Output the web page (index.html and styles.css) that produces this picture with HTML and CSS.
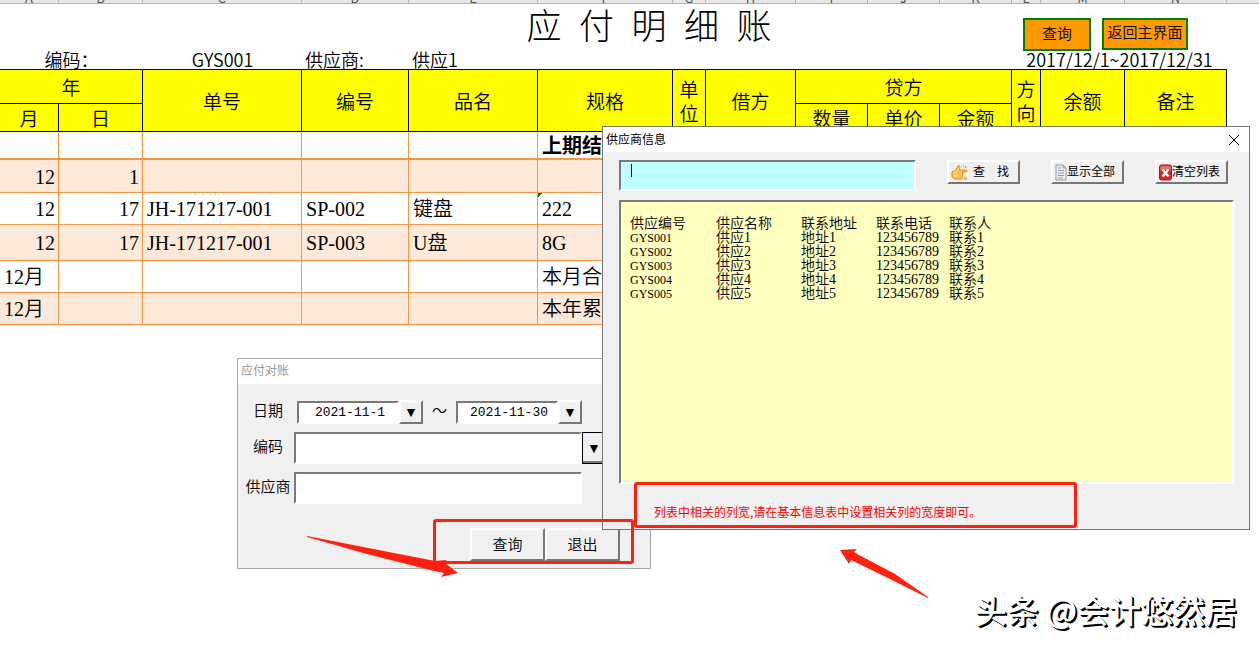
FILE: index.html
```html
<!DOCTYPE html>
<html lang="zh-CN">
<head>
    <meta charset="UTF-8">
    <meta name="viewport" content="width=device-width, initial-scale=1.0">
    <title>应付明细账</title>
    <link rel="stylesheet" href="styles.css">
</head>
<body>

    <!-- Hoja de calculo -->
    <main class="sheet">
        <div class="col-letters columns">
            <span>A</span><span>B</span><span>C</span><span>D</span><span>E</span><span>F</span><span>G</span>
            <span>H</span><span>I</span><span>J</span><span>K</span><span>L</span><span>M</span><span>N</span><span></span>
        </div>

        <div class="sheet-head columns">
            <h1 class="title">应  付  明  细  账</h1>
            <div class="actions">
                <button type="button" class="btn-orange">查询</button>
                <button type="button" class="btn-orange btn-small">返回主界面</button>
            </div>
        </div>
        <div class="info columns">
            <span class="info-label">编码：</span>
            <span class="info-code">GYS001</span>
            <span class="info-cell">供应商:</span>
            <span class="info-cell">供应1</span>
            <span class="info-dates">2017/12/1~2017/12/31</span>
        </div>

        <table class="ledger">
            <colgroup>
                <col class="c-a"><col class="c-b"><col class="c-c"><col class="c-d"><col class="c-e">
                <col class="c-f"><col class="c-g"><col class="c-h"><col class="c-i"><col class="c-i">
                <col class="c-i"><col class="c-l"><col class="c-m"><col class="c-n">
            </colgroup>
            <thead>
                <tr>
                    <th colspan="2">年</th>
                    <th rowspan="2">单号</th>
                    <th rowspan="2">编号</th>
                    <th rowspan="2">品名</th>
                    <th rowspan="2">规格</th>
                    <th rowspan="2">单<br>位</th>
                    <th rowspan="2">借方</th>
                    <th colspan="3">贷方</th>
                    <th rowspan="2">方<br>向</th>
                    <th rowspan="2">余额</th>
                    <th rowspan="2">备注</th>
                </tr>
                <tr class="sub">
                    <th>月</th>
                    <th>日</th>
                    <th>数量</th>
                    <th>单价</th>
                    <th>金额</th>
                </tr>
            </thead>
            <tbody>
                <tr class="opening">
                    <td></td><td></td><td></td><td></td><td></td><td>上期结余</td><td></td>
                    <td></td><td></td><td></td><td></td><td></td><td></td><td></td>
                </tr>
                <tr class="shade">
                    <td class="num">12</td><td class="num">1</td><td></td><td></td><td></td><td></td><td></td>
                    <td></td><td></td><td></td><td></td><td></td><td></td><td></td>
                </tr>
                <tr>
                    <td class="num">12</td><td class="num">17</td><td>JH-171217-001</td><td>SP-002</td><td>键盘</td><td class="flag">222</td><td></td>
                    <td></td><td></td><td></td><td></td><td></td><td></td><td></td>
                </tr>
                <tr class="shade tall">
                    <td class="num">12</td><td class="num">17</td><td>JH-171217-001</td><td>SP-003</td><td>U盘</td><td>8G</td><td></td>
                    <td></td><td></td><td></td><td></td><td></td><td></td><td></td>
                </tr>
                <tr>
                    <td>12月</td><td></td><td></td><td></td><td></td><td>本月合计</td><td></td>
                    <td></td><td></td><td></td><td></td><td></td><td></td><td></td>
                </tr>
                <tr class="shade">
                    <td>12月</td><td></td><td></td><td></td><td></td><td>本年累计</td><td></td>
                    <td></td><td></td><td></td><td></td><td></td><td></td><td></td>
                </tr>
            </tbody>
        </table>
    </main>

    <!-- Ventana de consulta -->
    <section class="window query-window">
        <header class="window-title inactive">应付对账</header>
        <form class="query-form">
            <div class="row">
                <label for="desde">日期</label>
                <div class="dates">
                    <input type="text" id="desde" class="sunken date" value="2021-11-1">
                    <button type="button" class="raised drop" aria-label="开始日期">▼</button>
                    <span class="tilde">～</span>
                    <input type="text" id="hasta" class="sunken date" value="2021-11-30" aria-label="结束日期">
                    <button type="button" class="raised drop" aria-label="结束日期">▼</button>
                </div>
            </div>
            <div class="row">
                <label for="codigo">编码</label>
                <input type="text" id="codigo" class="sunken field">
                <button type="button" class="raised drop drop-focus" aria-label="编码">▼</button>
            </div>
            <div class="row">
                <label for="proveedor">供应商</label>
                <input type="text" id="proveedor" class="sunken field">
            </div>
            <div class="buttons">
                <button type="button" class="raised">查询</button>
                <button type="button" class="raised">退出</button>
            </div>
        </form>
    </section>

    <!-- Ventana de proveedores -->
    <section class="window supplier-window">
        <header class="window-title">
            <span>供应商信息</span>
            <button type="button" class="close" aria-label="关闭">
                <svg width="12" height="12" viewBox="0 0 12 12"><path d="M1 1l10 10M11 1L1 11" stroke="#000" fill="none"/></svg>
            </button>
        </header>
        <div class="supplier-body">
            <div class="toolbar">
                <div class="sunken search">
                    <span class="caret"></span>
                    <input type="text" aria-label="查找">
                </div>
                <button type="button" class="raised tool">
                    <svg width="17" height="17" viewBox="0 0 17 17">
                        <path d="M1 8l3-1 3-5c1-1 2 0 2 1L8 6h7c1.500 0 1.500 2 0 2h-4c1.500 0 1.500 2 0 2 1 0 1 2 0 2 1 0 1 3-1 3H4l-3-2z" fill="#ffc457" stroke="#e8890c"/>
                        <path d="M2 9l3-1 3-4M3 12h4" stroke="#ffe9a8" fill="none"/>
                        <path d="M12 1l1 1M15 2l-1 2M13 14l1 1M15 13v3" stroke="#b5782c" fill="none"/>
                    </svg>
                    <span class="find">查　找</span>
                </button>
                <button type="button" class="raised tool">
                    <svg width="12" height="17" viewBox="0 0 12 17">
                        <path d="M1 1h7l3 3v12H1z" fill="#e9eef0" stroke="#94a0a6"/>
                        <path d="M8 1v3h3M3 4h3M3 6.500h6M3 9h6M3 11.500h6M3 14h5" stroke="#94a0a6" fill="none"/>
                    </svg>
                    <span>显示全部</span>
                </button>
                <button type="button" class="raised tool">
                    <svg width="13" height="17" viewBox="0 0 13 17">
                        <rect x="0.500" y="1" width="12" height="15" rx="2" fill="#d9252b" stroke="#b3161c"/>
                        <path d="M1 4q0-2 2-2h7q2 0 2 2v2H1z" fill="#ef6b6b"/>
                        <path d="M3.500 5.500l6 7M9.500 5.500l-6 7" stroke="#fff" stroke-width="2.500" fill="none"/>
                    </svg>
                    <span>清空列表</span>
                </button>
            </div>
            <div class="sunken list">
                <table>
                    <thead>
                        <tr><th>供应编号</th><th>供应名称</th><th>联系地址</th><th>联系电话</th><th>联系人</th></tr>
                    </thead>
                    <tbody>
                        <tr><td class="code">GYS001</td><td>供应1</td><td>地址1</td><td>123456789</td><td>联系1</td></tr>
                        <tr><td class="code">GYS002</td><td>供应2</td><td>地址2</td><td>123456789</td><td>联系2</td></tr>
                        <tr><td class="code">GYS003</td><td>供应3</td><td>地址3</td><td>123456789</td><td>联系3</td></tr>
                        <tr><td class="code">GYS004</td><td>供应4</td><td>地址4</td><td>123456789</td><td>联系4</td></tr>
                        <tr><td class="code">GYS005</td><td>供应5</td><td>地址5</td><td>123456789</td><td>联系5</td></tr>
                    </tbody>
                </table>
            </div>
            <p class="hint">列表中相关的列宽,请在基本信息表中设置相关列的宽度即可。</p>
        </div>
    </section>

    <!-- Marcas rojas -->
    <div class="mark mark-buttons"></div>
    <div class="mark mark-hint"></div>
    <svg class="arrow arrow-left" width="152" height="42" viewBox="0 0 152 42">
        <path d="M0 0L128 25l11-1-1 3 13 10-17 4 3-4-10-2L60 18 0 1z" fill="#ff2010"/>
    </svg>
    <svg class="arrow arrow-right" width="89" height="49" viewBox="0 0 89 49">
        <path d="M0 1L17 0l-3 3 5 3 36 19 33 23v1L48 29 11 11l-2 4z" fill="#ff2010"/>
    </svg>
    <div class="watermark">头条 @会计悠然居</div>

</body>
</html>
```
FILE: styles.css
```css
* {
    box-sizing: border-box;
}
body {
    position: relative;
    margin: 0;
    min-height: 100vh;
    background-color: #fff;
    color: #000;
    font-family: "Noto Sans CJK SC", sans-serif;
    font-weight: 350;
    overflow: hidden;
}
button, input {
    font-family: inherit;
    font-weight: inherit;
    color: inherit;
    margin: 0;
    padding: 0;
}
.columns {
    display: grid;
    grid-template-columns: 59px 84px 159px 107px 129px 135px 33px 90px 72px 72px 72px 29px 84px 102px 1fr;
}

/* hoja */
.col-letters {
    height: 4px;
    overflow: hidden;
    background-color: #e6e6e6;
    border-bottom: 1px solid #b5b5b5;
}
.col-letters span {
    height: 3px;
    border-right: 1px solid #b5b5b5;
    display: flex;
    justify-content: center;
    align-items: flex-end;
    font-size: 13px;
    line-height: 10px;
    font-weight: 400;
    color: #555;
}
.col-letters span:last-child {
    border-right: none;
}
.sheet-head {
    height: 47px;
}
.title {
    grid-column: 4 / 12;
    margin: 0;
    padding-right: 16px;
    text-align: center;
    white-space: pre;
    font-family: "Liberation Serif", "Noto Sans CJK SC", serif;
    font-size: 35px;
    line-height: 48px;
    font-weight: 300;
}
.actions {
    grid-column: 12 / 16;
    display: flex;
    align-items: flex-start;
    gap: 11px;
    padding: 14px 0 0 11px;
}
.btn-orange {
    width: 68px;
    height: 33px;
    flex: none;
    padding-bottom: 4px;
    background-color: #ff9900;
    border: 2px solid #008000;
    font-size: 15px;
    line-height: 24px;
    white-space: nowrap;
}
.btn-small {
    width: 86px;
    height: 32px;
}
.info {
    height: 18px;
    font-size: 18px;
    line-height: 16px;
    white-space: nowrap;
}
.info-label {
    grid-column: 1 / 3;
    text-align: center;
}
.info-code {
    text-align: center;
}
.info-cell {
    padding-left: 3px;
}
.info-dates {
    grid-column: 12 / 15;
    text-align: center;
}

.ledger {
    table-layout: fixed;
    width: 1227px;
    border-spacing: 0;
    font-family: "Liberation Serif", "Noto Sans CJK SC", serif;
    font-size: 20px;
    line-height: 24px;
}
.c-a { width: 59px; }
.c-b { width: 84px; }
.c-c { width: 159px; }
.c-d { width: 107px; }
.c-e { width: 129px; }
.c-f { width: 135px; }
.c-g { width: 33px; }
.c-h { width: 90px; }
.c-i { width: 72px; }
.c-l { width: 29px; }
.c-m { width: 84px; }
.c-n { width: 102px; }
.ledger th {
    padding: 0;
    background-color: #ff0;
    border-right: 1px solid #000;
    border-bottom: 1px solid #000;
    font-family: "Noto Sans CJK SC", sans-serif;
    font-size: 19px;
    font-weight: 350;
}
.ledger thead tr:first-child th {
    height: 35px;
    border-top: 1px solid #000;
}
.ledger thead .sub th {
    height: 28px;
}
.ledger td {
    height: 32px;
    padding: 1px 3px 0 4px;
    border-right: 1px solid #f79646;
    border-bottom: 1px solid #f79646;
    white-space: nowrap;
}
.ledger .opening td {
    height: 28px;
    border-bottom-width: 2px;
    font-weight: 700;
}
.ledger .opening + .shade td {
    height: 33px;
}
.ledger .tall td {
    height: 36px;
}
.shade {
    background-color: #fde9d9;
}
.ledger .num {
    text-align: right;
}
.flag {
    background: linear-gradient(135deg, #008000 50%, transparent 50%) 0 0 / 5px 5px no-repeat;
}

/* ventanas */
.window {
    position: absolute;
    background-color: #f0f0f0;
    border: 1px solid #777;
}
.window-title {
    display: flex;
    justify-content: space-between;
    align-items: center;
    height: 25px;
    padding: 0 9px 0 3px;
    background-color: #fff;
    font-size: 12px;
    line-height: 20px;
    font-weight: 400;
}
.window-title span {
    padding-bottom: 2px;
}
.inactive {
    padding-bottom: 3px;
    color: #999;
}
.close {
    display: flex;
    border: none;
    background: none;
}
.sunken {
    background-color: #fff;
    border: 2px solid;
    border-color: #7a7a7a #fff #fff #7a7a7a;
    border-radius: 0;
    outline: none;
}
.raised {
    background-color: #f0f0f0;
    border: 2px solid;
    border-color: #fff #777 #777 #fff;
    border-radius: 0;
}

.query-window {
    left: 237px;
    top: 358px;
    width: 414px;
    height: 211px;
    border-color: #aaa;
}
.query-form {
    display: flex;
    flex-direction: column;
    gap: 8px;
    padding-top: 16px;
    font-size: 15px;
}
.row {
    display: flex;
    align-items: center;
}
.row label {
    width: 56px;
    padding: 0 0 4px 4px;
    line-height: 20px;
    text-align: center;
    white-space: nowrap;
}
.dates {
    display: flex;
    align-items: center;
    margin-left: 3px;
}
.date {
    width: 102px;
    height: 23px;
    padding-left: 4px;
    text-align: center;
    font-family: "Liberation Mono", monospace;
    font-size: 13px;
}
.drop {
    width: 24px;
    height: 24px;
    font-family: "DejaVu Sans", sans-serif;
    font-size: 14px;
    line-height: 14px;
}
.tilde {
    width: 33px;
    padding-bottom: 4px;
    text-align: center;
    line-height: 20px;
}
.field {
    width: 288px;
    height: 32px;
    font-size: 15px;
}
.drop-focus {
    height: 32px;
    border: 1px solid #000;
    box-shadow: inset -2px -2px 0 #777;
}
.buttons {
    display: flex;
    margin: 16px 0 0 232px;
}
.buttons button {
    width: 75px;
    height: 33px;
    padding-bottom: 2px;
    font-size: 15px;
}

.supplier-window {
    left: 602px;
    top: 126px;
    width: 648px;
    height: 404px;
}
.supplier-body {
    padding: 8px 15px 0 16px;
}
.toolbar {
    display: flex;
    align-items: flex-start;
    gap: 31px;
    padding-right: 6px;
}
.search {
    flex: 1;
    display: flex;
    height: 31px;
    padding: 2px 0 0 10px;
    background-color: #c0ffff;
}
.search input {
    flex: 1;
    min-width: 0;
    border: none;
    outline: none;
    background: none;
    font-size: 14px;
}
.caret {
    width: 1px;
    height: 13px;
    background-color: #000;
}
.tool {
    display: flex;
    align-items: center;
    width: 73px;
    height: 24px;
    padding-left: 2px;
    font-size: 12px;
    line-height: 16px;
    font-weight: 400;
    white-space: nowrap;
}
.tool span {
    padding-bottom: 2px;
}
.tool .find {
    padding-left: 5px;
}
.list {
    height: 284px;
    margin-top: 9px;
    padding: 15px 0 0 9px;
    background-color: #ffffc0;
}
.list table {
    table-layout: fixed;
    width: 400px;
    border-spacing: 0;
    font-family: "Liberation Serif", "Noto Sans CJK SC", serif;
    font-size: 14px;
    line-height: 14px;
}
.list th, .list td {
    height: 14px;
    padding: 0;
    text-align: left;
    font-weight: 350;
    white-space: nowrap;
}
.list th:nth-child(1) { width: 86px; }
.list th:nth-child(2) { width: 85px; }
.list th:nth-child(3) { width: 75px; }
.list th:nth-child(4) { width: 73px; }
.list .code {
    font-size: 12px;
}
.hint {
    margin: 20px 0 0 35px;
    font-size: 12px;
    line-height: 16px;
    font-weight: 400;
    color: #f00;
}

/* marcas */
.mark {
    position: absolute;
    border: 3px solid #ff2010;
    border-radius: 3px;
    pointer-events: none;
}
.mark-buttons {
    left: 433px;
    top: 519px;
    width: 201px;
    height: 45px;
}
.mark-hint {
    left: 634px;
    top: 482px;
    width: 443px;
    height: 46px;
}
.arrow {
    position: absolute;
}
.arrow-left {
    left: 307px;
    top: 536px;
}
.arrow-right {
    left: 840px;
    top: 549px;
}
.watermark {
    position: absolute;
    right: 22px;
    bottom: 14px;
    font-size: 32px;
    line-height: 48px;
    font-weight: 500;
    color: #fff;
    text-shadow: 1px 1px 0 #000, 2px 2px 0 #000;
}
```
